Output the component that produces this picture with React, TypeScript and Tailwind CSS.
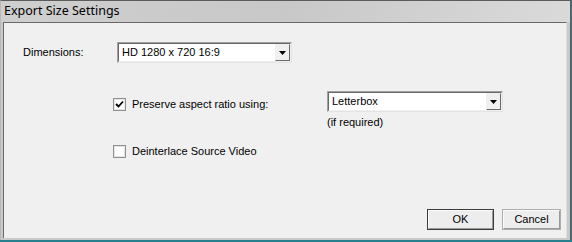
import React from "react";

const font = { fontFamily: '"Liberation Sans", Arial, sans-serif' };

function Arrow() {
  return (
    <svg width="7" height="4" viewBox="0 0 7 4">
      <polygon points="0,0 7,0 3.5,4" fill="#000" />
    </svg>
  );
}

function Combo({ value, width }: { value: string; width: string }) {
  return (
    <div className={`${width} h-[21px] border border-t-[#a0a0a0] border-l-[#a0a0a0] border-b-[#e3e3e3] border-r-[#e3e3e3]`}>
      <div className="h-full w-full border border-t-[#696969] border-l-[#696969] border-b-[#f0f0f0] border-r-[#f0f0f0] bg-white flex items-center">
        <span className="flex-1 pl-[3px] text-[11px] text-black leading-none">{value}</span>
        <div className="w-[15px] h-full border border-t-[#f0f0f0] border-l-[#f0f0f0] border-b-[#696969] border-r-[#696969] bg-[#f0f0f0] flex items-center justify-center">
          <Arrow />
        </div>
      </div>
    </div>
  );
}

function Check({ checked, label }: { checked: boolean; label: string }) {
  return (
    <div className="flex items-center gap-[6px]">
      <div className="w-[13px] h-[13px] border border-[#8e8f8f] bg-white flex items-center justify-center">
        <div className="w-[11px] h-[11px] border border-[#e6e6e6] bg-white flex items-center justify-center">
          {checked && (
            <svg width="9" height="9" viewBox="0 0 9 9">
              <path d="M1 4 L3.5 6.5 L8 1.5" stroke="#000" strokeWidth="1.8" fill="none" />
            </svg>
          )}
        </div>
      </div>
      <span className="text-[11px] text-black leading-none">{label}</span>
    </div>
  );
}

function Btn({ label, isDefault }: { label: string; isDefault?: boolean }) {
  return (
    <div className={`h-[21px] border ${isDefault ? "w-[67px] border-[#3c3c3c]" : "w-[59px] border-[#adadad]"} bg-[#e6e6e6] flex items-center justify-center`}>
      <div className="w-full h-full border border-t-[#fbfbfb] border-l-[#fbfbfb] border-b-[#9a9a9a] border-r-[#9a9a9a] bg-[#ededed] flex items-center justify-center">
        <span className="text-[11px] text-black leading-none">{label}</span>
      </div>
    </div>
  );
}

export default function App() {
  return (
    <div className="w-[572px] h-[242px] bg-[#277f8d] overflow-hidden" style={font}>
      <div className="w-[571px] h-[240px] bg-[#c9c9c9] border-t border-r border-[#5c5c5c] border-l border-l-[#b9b9b9] flex flex-col">
        <div className="h-[21px] bg-gradient-to-r from-[#cfcfcf] via-[#c8c8c8] to-[#dadada] flex items-center pl-[3px]">
          <span className="text-[12.5px] text-black leading-none" style={{ fontFamily: '"Noto Sans", "Liberation Sans", sans-serif' }}>
            Export Size Settings
          </span>
        </div>
        <div className="flex-1 ml-[2px] mr-[3px] mb-[2px] bg-[#f0f0f0] border-t border-l border-[#6a6a6a] border-r border-r-[#e0e0e0] flex flex-col">
          <div className="flex items-center mt-[19px] pl-[19px]">
            <span className="w-[94px] text-[11px] text-black leading-none">Dimensions:</span>
            <Combo value="HD 1280 x 720 16:9" width="w-[175px]" />
          </div>
          <div className="flex mt-[28px] pl-[109px]">
            <div className="w-[214px] pt-[7px]">
              <Check checked label="Preserve aspect ratio using:" />
            </div>
            <div className="flex flex-col">
              <Combo value="Letterbox" width="w-[176px]" />
              <span className="mt-[5px] text-[11px] text-black leading-none">(if required)</span>
            </div>
          </div>
          <div className="mt-[17px] pl-[109px]">
            <Check checked={false} label="Deinterlace Source Video" />
          </div>
          <div className="flex-1" />
          <div className="flex justify-end gap-[8px] pr-[5px] mb-[8px]">
            <Btn label="OK" isDefault />
            <Btn label="Cancel" />
          </div>
        </div>
      </div>
    </div>
  );
}
